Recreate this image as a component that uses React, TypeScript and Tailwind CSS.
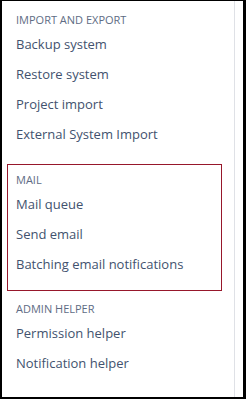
import React from 'react';

const sections = [
  {
    title: 'IMPORT AND EXPORT',
    items: ['Backup system', 'Restore system', 'Project import', 'External System Import'],
  },
  {
    title: 'MAIL',
    items: ['Mail queue', 'Send email', 'Batching email notifications'],
    highlight: true,
  },
  {
    title: 'ADMIN HELPER',
    items: ['Permission helper', 'Notification helper'],
  },
];

const Section = ({ title, items }: { title: string; items: string[] }) => (
  <div>
    <div className="h-5 flex items-center text-[11px] text-[#5e6c84] leading-none">{title}</div>
    {items.map((item) => (
      <a key={item} className="h-[30px] flex items-center text-[13px] text-[#42526e] leading-none cursor-pointer">
        {item}
      </a>
    ))}
  </div>
);

export default function App() {
  return (
    <div
      className="w-[246px] h-[399px] bg-white border-l-2 border-t border-r-[3px] border-b-2 border-black flex overflow-hidden"
      style={{ fontFamily: '"Open Sans", "Noto Sans", sans-serif' }}
    >
      <nav className="w-[233px] border-r border-[#dfe1e6] flex flex-col">
        <div className="pl-[14px] pt-2">
          <Section title={sections[0].title} items={sections[0].items} />
        </div>
        <div className="ml-[5px] mr-[12px] mt-[15px] border border-[#97172b] pl-2 pt-1 pb-[11px]">
          <Section title={sections[1].title} items={sections[1].items} />
        </div>
        <div className="pl-[14px] pt-[7px]">
          <Section title={sections[2].title} items={sections[2].items} />
        </div>
      </nav>
    </div>
  );
}
